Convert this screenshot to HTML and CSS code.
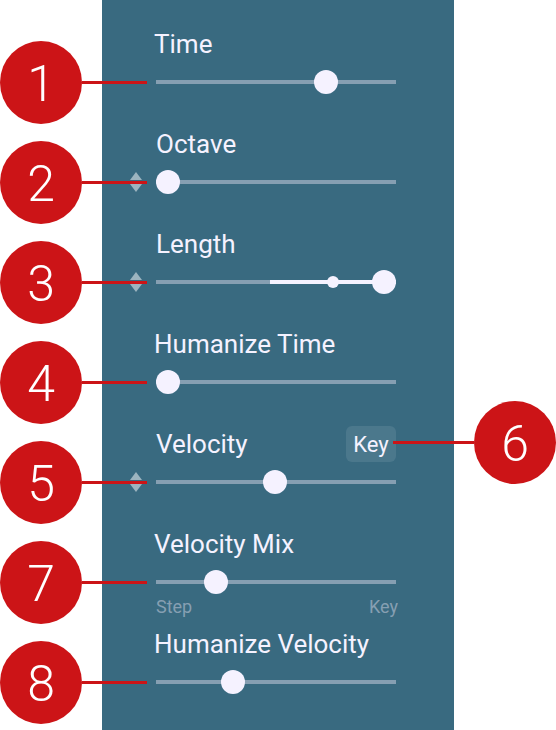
FILE: index.html
```
<!DOCTYPE html>
<html lang="en">
<head>
    <meta charset="UTF-8">
    <meta name="viewport" content="width=device-width, initial-scale=1">
    <title>Step parameters</title>
    <link rel="stylesheet" href="styles.css">
</head>
<body>
    <main class="panel">
        <div class="param">
            <div class="param-head"><label for="time">Time</label></div>
            <div class="slider"><input type="range" id="time" min="0" max="127" value="93"></div>
            <div class="callout"><span class="number">1</span></div>
        </div>

        <div class="param stepped">
            <div class="param-head"><label for="octave">Octave</label></div>
            <div class="stepper">
                <button type="button" aria-label="Octave up"><svg viewBox="0 0 12 8"><path d="M6 0L12 8H0z"/></svg></button>
                <button type="button" aria-label="Octave down"><svg viewBox="0 0 12 8"><path d="M0 0H12L6 8z"/></svg></button>
            </div>
            <div class="slider"><input type="range" id="octave" min="0" max="127" value="0"></div>
            <div class="callout"><span class="number">2</span></div>
        </div>

        <div class="param stepped">
            <div class="param-head"><label for="length">Length</label></div>
            <div class="stepper">
                <button type="button" aria-label="Length up"><svg viewBox="0 0 12 8"><path d="M6 0L12 8H0z"/></svg></button>
                <button type="button" aria-label="Length down"><svg viewBox="0 0 12 8"><path d="M0 0H12L6 8z"/></svg></button>
            </div>
            <div class="slider ranged" style="--start: 47.5%">
                <input type="range" id="length" min="0" max="127" value="127">
                <input type="range" class="inner" aria-label="Length variation" min="0" max="127" value="95">
            </div>
            <div class="callout"><span class="number">3</span></div>
        </div>

        <div class="param">
            <div class="param-head"><label for="humanize-time">Humanize Time</label></div>
            <div class="slider"><input type="range" id="humanize-time" min="0" max="127" value="0"></div>
            <div class="callout"><span class="number">4</span></div>
        </div>

        <div class="param stepped">
            <div class="param-head">
                <label for="velocity">Velocity</label>
                <button type="button" class="key-btn">Key</button>
            </div>
            <div class="stepper">
                <button type="button" aria-label="Velocity up"><svg viewBox="0 0 12 8"><path d="M6 0L12 8H0z"/></svg></button>
                <button type="button" aria-label="Velocity down"><svg viewBox="0 0 12 8"><path d="M0 0H12L6 8z"/></svg></button>
            </div>
            <div class="slider"><input type="range" id="velocity" min="0" max="127" value="63"></div>
            <div class="callout"><span class="number">5</span></div>
            <div class="callout callout-right"><span class="number">6</span></div>
        </div>

        <div class="param scaled">
            <div class="param-head"><label for="velocity-mix">Velocity Mix</label></div>
            <div class="slider"><input type="range" id="velocity-mix" min="0" max="127" value="28"></div>
            <div class="scale"><span>Step</span><span>Key</span></div>
            <div class="callout"><span class="number">7</span></div>
        </div>

        <div class="param">
            <div class="param-head"><label for="humanize-velocity">Humanize Velocity</label></div>
            <div class="slider"><input type="range" id="humanize-velocity" min="0" max="127" value="38"></div>
            <div class="callout"><span class="number">8</span></div>
        </div>
    </main>
</body>
</html>
```
FILE: styles.css
```
* {
    margin: 0;
    padding: 0;
    box-sizing: border-box;
}

:root {
    --panel: #396a80;
    --track: #869fb2;
    --light: #f5f2ff;
    --red: #cc1417;
}

body {
    font-family: Roboto, "Liberation Sans", sans-serif;
    background: #fff;
    color: var(--light);
}

button {
    border: 0;
    background: none;
    color: inherit;
    font-family: inherit;
    cursor: pointer;
}

.panel {
    min-height: 100vh;
    margin: 0 102px;
    padding: 26px 58px 0 28px;
    background: var(--panel);
}

/* stepper column on the left, slider on the right */
.param {
    position: relative;
    display: grid;
    grid-template-columns: 12px 1fr;
    column-gap: 14px;
    margin-bottom: 32px;
}

.param.scaled {
    margin-bottom: 6px;
}

.param-head {
    grid-column: 1 / -1;
    display: flex;
    justify-content: space-between;
    align-items: center;
    height: 36px;
    margin-bottom: 8px;
    padding-left: 24px;
    font-size: 26px;
    line-height: 36px;
    white-space: nowrap;
}

.stepped .param-head {
    padding-left: 26px;
}

.key-btn {
    width: 50px;
    height: 36px;
    border-radius: 6px;
    background: #4b788c;
    font-size: 22px;
}

.stepper {
    grid-column: 1;
    display: flex;
    flex-direction: column;
    justify-content: center;
    gap: 4px;
}

.stepper button {
    height: 8px;
}

.stepper svg {
    display: block;
    width: 12px;
    height: 8px;
    fill: #9cb4bf;
}

.slider {
    grid-column: 2;
    position: relative;
    height: 24px;
}

.slider input {
    -webkit-appearance: none;
    appearance: none;
    display: block;
    width: 100%;
    height: 24px;
    background: none;
    cursor: pointer;
}

.slider input::-webkit-slider-runnable-track {
    height: 4px;
    background: var(--track);
}

.slider input::-webkit-slider-thumb {
    -webkit-appearance: none;
    width: 24px;
    height: 24px;
    margin-top: -10px;
    border-radius: 50%;
    background: var(--light);
}

.ranged input::-webkit-slider-runnable-track {
    background: linear-gradient(to right, var(--track) var(--start), var(--light) var(--start));
}

/* second, smaller handle on the same track */
.slider .inner {
    position: absolute;
    top: 0;
    left: 0;
    pointer-events: none;
}

.slider .inner::-webkit-slider-runnable-track {
    background: none;
}

.slider .inner::-webkit-slider-thumb {
    width: 12px;
    height: 12px;
    margin-top: -4px;
    pointer-events: auto;
}

.scale {
    grid-column: 2;
    display: flex;
    justify-content: space-between;
    margin-right: -2px;
    font-size: 18px;
    line-height: 26px;
    color: var(--track);
}

/* numbered callouts laid over the panel */
.callout {
    position: absolute;
    top: 15px;
    left: -130px;
    display: flex;
    align-items: center;
    width: 147px;
    pointer-events: none;
}

.callout::after {
    content: "";
    flex: 1;
    height: 3px;
    background: var(--red);
}

.callout-right {
    top: -25px;
    left: auto;
    right: -160px;
    flex-direction: row-reverse;
    width: 163px;
}

.number {
    width: 82px;
    height: 83px;
    padding-top: 2px;
    border-radius: 50%;
    background: var(--red);
    color: #fff;
    font-size: 50px;
    font-weight: 300;
    line-height: 82px;
    text-align: center;
}
```
